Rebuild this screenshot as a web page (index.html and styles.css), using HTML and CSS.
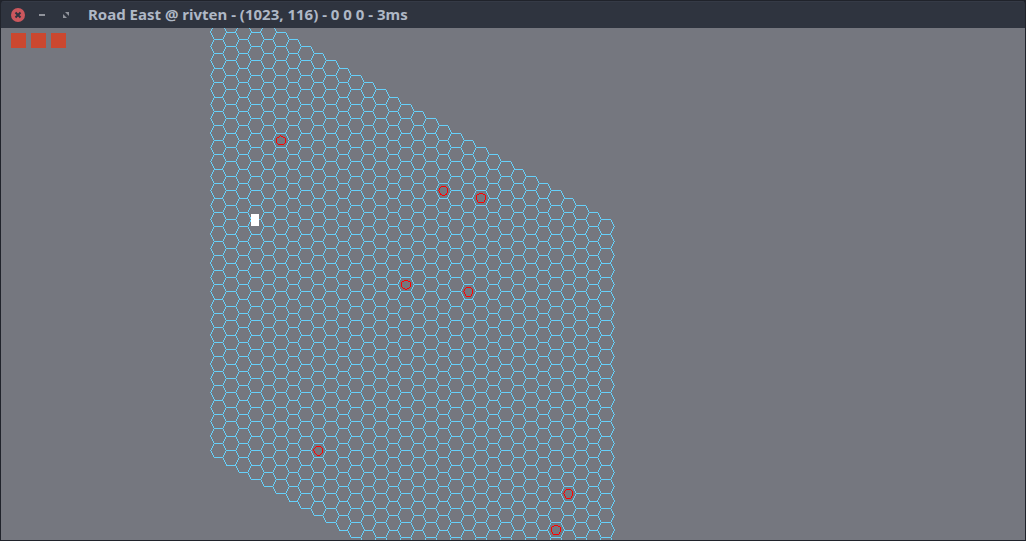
FILE: index.html
```html
<!DOCTYPE html>
<html lang="en">
<head>
<meta charset="utf-8">
<title>Road East</title>
<link rel="stylesheet" href="styles.css">
</head>
<body>
<div class="window">
  <header class="titlebar">
    <div class="controls">
      <button class="control" type="button" aria-label="Close">
        <svg viewBox="0 0 14 14" width="14" height="14"><circle cx="7" cy="7" r="7" fill="#cc575d"/><path d="M4.5 4.5l5 5M9.5 4.5l-5 5" stroke="#2f343f" stroke-width="2"/></svg>
      </button>
      <button class="control" type="button" aria-label="Minimize">
        <svg viewBox="0 0 14 14" width="14" height="14"><path d="M4 6h6v2H4z" fill="#90939b"/></svg>
      </button>
      <button class="control" type="button" aria-label="Maximize">
        <svg viewBox="0 0 14 14" width="14" height="14"><path d="M6 4h4v4zM4 6l4 4H4z" fill="#90939b"/></svg>
      </button>
    </div>
    <h1 class="title">Road East @ rivten - (1023, 116) - 0 0 0 - 3ms</h1>
  </header>
  <main class="stage">
    <canvas class="board"></canvas>
    <div class="swatches">
      <span class="swatch"></span>
      <span class="swatch"></span>
      <span class="swatch"></span>
    </div>
  </main>
</div>
<script src="board.js"></script>
</body>
</html>
```

FILE: styles.css
```css
* {
  box-sizing: border-box;
}

body {
  margin: 0;
  background: #20232b;
}

.window {
  display: flex;
  flex-direction: column;
  height: 100vh;
  border: 1px solid #20232b;
  border-radius: 4px 4px 0 0;
  overflow: hidden;
}

.titlebar {
  display: flex;
  flex: none;
  align-items: center;
  gap: 15px;
  height: 27px;
  padding: 0 10px;
  background: #2f343f;
  border-top: 1px solid #353a46;
}

.controls {
  display: flex;
  gap: 10px;
}

.control {
  display: block;
  padding: 0;
  border: 0;
  background: none;
}

.control svg {
  display: block;
}

.title {
  margin: 0;
  padding-bottom: 2px;
  color: #afb8c6;
  font: bold 15px/20px "Noto Sans", sans-serif;
  white-space: nowrap;
}

.stage {
  position: relative;
  flex: 1;
  min-height: 0;
  background: #75777f;
}

.board {
  position: absolute;
  inset: 0;
  width: 100%;
  height: 100%;
}

.swatches {
  position: absolute;
  top: 5px;
  left: 10px;
  display: flex;
  gap: 5px;
}

.swatch {
  width: 15px;
  height: 15px;
  background: #cb4830;
}
```

FILE: board.js
```javascript
const canvas = document.querySelector(".board");
const ctx = canvas.getContext("2d");

const COLUMNS = 32;
const ROWS = 32;
const SIZE = 25 / 3;
const HEIGHT = SIZE * Math.sqrt(3);
const ORIGIN = { x: 217.4, y: -24.8 };
const MARKER_RADIUS = 4.5;
const MARKERS = [[5, 7], [18, 4], [21, 3], [15, 12], [20, 10], [8, 27], [28, 20], [27, 23]];

function center(q, r) {
  return { x: ORIGIN.x + q * SIZE * 1.5, y: ORIGIN.y + q * HEIGHT / 2 + r * HEIGHT };
}

// Aliased one-pixel line, always drawn downwards so shared edges coincide.
function line(x0, y0, x1, y1) {
  if (y0 > y1) [x0, y0, x1, y1] = [x1, y1, x0, y0];
  const dx = Math.abs(x1 - x0);
  const dy = y0 - y1;
  const sx = x0 < x1 ? 1 : -1;
  let err = dx + dy;
  for (;;) {
    ctx.fillRect(x0, y0, 1, 1);
    if (x0 === x1 && y0 === y1) return;
    const e2 = 2 * err;
    if (e2 >= dy) { err += dy; x0 += sx; }
    if (e2 <= dx) { err += dx; y0 += 1; }
  }
}

function polygon(c, radius, sides) {
  const points = [];
  for (let i = 0; i < sides; i++) {
    const a = 2 * Math.PI * i / sides;
    points.push([Math.floor(c.x + radius * Math.cos(a)), Math.floor(c.y + radius * Math.sin(a))]);
  }
  points.forEach((p, i) => line(...p, ...points[(i + 1) % sides]));
}

function draw() {
  canvas.width = canvas.clientWidth;
  canvas.height = canvas.clientHeight;
  ctx.fillStyle = "#66d0fa";
  for (let q = 0; q < COLUMNS; q++) {
    for (let r = 0; r < ROWS; r++) polygon(center(q, r), SIZE, 6);
  }
  ctx.fillStyle = "#ff0000";
  MARKERS.forEach(([q, r]) => polygon(center(q, r), MARKER_RADIUS, 16));
  ctx.fillStyle = "#ffffff";
  ctx.fillRect(250, 186, 8, 12);
}

window.addEventListener("resize", draw);
draw();
```
